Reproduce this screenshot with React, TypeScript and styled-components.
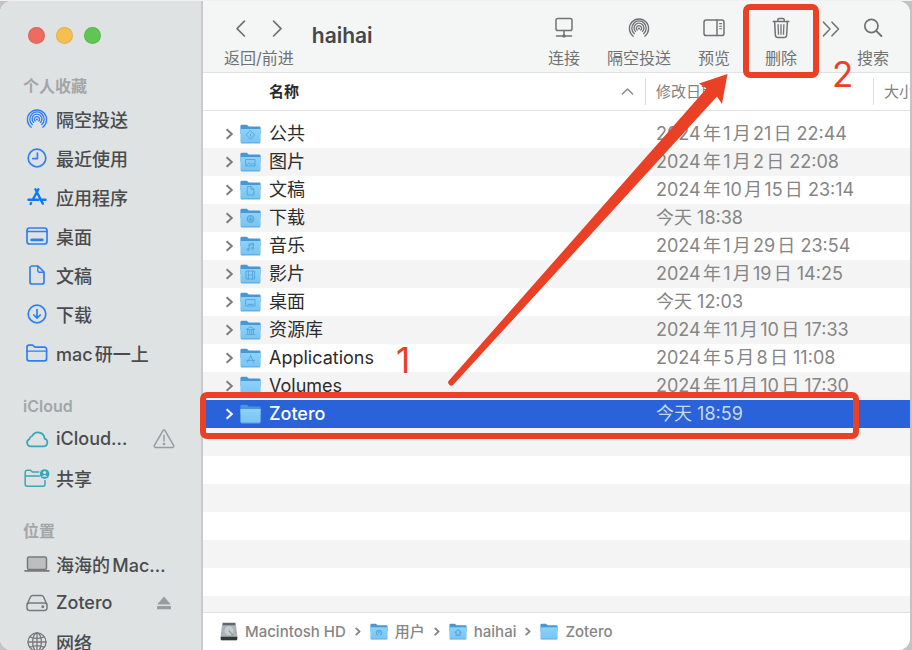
import React from "react";
import styled, { createGlobalStyle } from "styled-components";

const sans = `Inter, "Noto Sans CJK SC", sans-serif`;
const markRed = "#ea4026";

const GlobalStyle = createGlobalStyle`
  *, *::before, *::after { box-sizing: border-box; }
  body {
    margin: 0;
    background: #c2c3c4;
    font-family: ${sans};
    text-autospace: normal;
  }
  button { font: inherit; color: inherit; background: none; border: 0; padding: 0; cursor: default; }
  a { color: inherit; text-decoration: none; }
  svg { display: block; flex: none; }
`;

const Desktop = styled.div`
  position: relative;
  height: 100vh;
  padding-right: 2px;
  border-top: 1px solid #f0f0f0;
  overflow: hidden;
`;

const Window = styled.div`
  display: flex;
  height: 100%;
  background: #fff;
  border-radius: 12px;
  overflow: hidden;
`;

const Sidebar = styled.nav`
  flex: none;
  width: 203px;
  overflow: hidden;
  background: #dee2e3;
  border-right: 2px solid #c9cacc;
`;

const Lights = styled.div`
  display: flex;
  gap: 11px;
  height: 72px;
  padding: 26px 0 0 28px;
`;

const Light = styled.button<{ $color: string }>`
  width: 17px;
  height: 17px;
  border-radius: 50%;
  background: ${(p) => p.$color};
  box-shadow: inset 0 0 0 1px rgba(0, 0, 0, 0.08);
`;

const Group = styled.section`
  margin-bottom: 21px;
`;

const GroupTitle = styled.h2`
  margin: 0;
  padding-left: 23px;
  font-size: 16px;
  line-height: 26px;
  font-weight: 600;
  color: #a3a6a7;
`;

const Place = styled.a`
  display: flex;
  align-items: center;
  height: 39px;
  padding: 0 26px 0 24px;
  gap: 6px;
  font-size: 18px;
  font-weight: 500;
  color: #4a4b4d;
`;

const PlaceIcon = styled.span<{ $color: string }>`
  display: flex;
  justify-content: center;
  flex: none;
  width: 26px;
  color: ${(p) => p.$color};
`;

const PlaceName = styled.span`
  flex: 1;
  white-space: nowrap;
`;

const Extra = styled.span`
  display: flex;
  justify-content: center;
  flex: none;
  width: 22px;
  color: #999c9e;
`;

const Main = styled.main`
  flex: 1;
  min-width: 0;
  display: flex;
  flex-direction: column;
`;

const Toolbar = styled.header`
  flex: none;
  display: flex;
  height: 72px;
  padding: 0 13px 0 21px;
  background: #f4f6f6;
  border-bottom: 1px solid #e0e2e2;
  color: #707273;
  font-size: 16px;
  line-height: 20px;
`;

const History = styled.div`
  display: flex;
  flex-direction: column;
  align-items: center;
  gap: 8px;
  padding-top: 15px;
`;

const HistoryButtons = styled.div`
  display: flex;
  gap: 16px;
  height: 24px;
`;

const Title = styled.h1`
  flex: 1;
  margin: 0;
  padding: 21px 0 0 18px;
  font-size: 21px;
  line-height: 28px;
  font-weight: 600;
  color: #454748;
`;

const Tool = styled.button<{ $width: number }>`
  display: flex;
  flex-direction: column;
  align-items: center;
  flex: none;
  width: ${(p) => p.$width}px;
  padding-top: 15px;
  gap: 8px;
  white-space: nowrap;
`;

const ToolIcon = styled.span`
  display: flex;
  align-items: center;
  height: 24px;
`;

const Files = styled.div`
  flex: 1;
  min-height: 0;
  overflow: hidden;
`;

const Table = styled.table`
  width: 100%;
  table-layout: fixed;
  border-collapse: separate;
  border-spacing: 0;
  tbody::before {
    content: "";
    display: block;
    height: 9px;
  }
`;

const NameCol = styled.col``;
const DateCol = styled.col`
  width: 228px;
`;
const SizeCol = styled.col`
  width: 37px;
`;

const HeadCell = styled.th<{ $strong?: boolean }>`
  height: 38px;
  padding: 0;
  overflow: hidden;
  border-bottom: 1px solid #e2e2e2;
  text-align: left;
  white-space: nowrap;
  font-size: 15px;
  line-height: 22px;
  font-weight: ${(p) => (p.$strong ? 700 : 400)};
  color: ${(p) => (p.$strong ? "#2a2a2a" : "#808080")};
`;

const HeadLabel = styled.span<{ $lead?: boolean }>`
  display: flex;
  align-items: center;
  justify-content: space-between;
  height: 27px;
  padding: 0 ${(p) => (p.$lead ? 11 : 0)}px 0 ${(p) => (p.$lead ? 66 : 10)}px;
  border-left: ${(p) => (p.$lead ? "0" : "1px solid #dcdcdc")};
`;

const Row = styled.tr<{ $selected?: boolean }>`
  height: 28px;
  font-size: 18px;
  line-height: 28px;
  color: ${(p) => (p.$selected ? "#fff" : "#2c2c2c")};
  background: ${(p) => (p.$selected ? "#2962d9" : "#fff")};
  &:nth-child(even) {
    background: #f4f4f4;
  }
`;

const Cell = styled.td`
  height: 28px;
  padding: 0;
`;

const NameCell = styled.div<{ $selected?: boolean }>`
  display: flex;
  align-items: center;
  height: 28px;
  padding-left: 20px;
  font-weight: ${(p) => (p.$selected ? 500 : 400)};
`;

const Disclosure = styled.button<{ $selected?: boolean }>`
  width: 17px;
  height: 20px;
  display: flex;
  align-items: center;
  padding-left: 2px;
  color: ${(p) => (p.$selected ? "#fff" : "#7c7c7c")};
`;

const FileName = styled.span`
  padding-left: 8px;
`;

const DateCell = styled(Cell)<{ $selected?: boolean }>`
  padding-left: 11px;
  white-space: nowrap;
  color: ${(p) => (p.$selected ? "#c9d8f7" : "#858585")};
`;

const PathBar = styled.footer`
  flex: none;
  display: flex;
  align-items: center;
  gap: 9px;
  height: 38px;
  padding: 0 17px;
  border-top: 1px solid #e0e0e0;
  background: #fff;
  font-size: 15px;
  line-height: 20px;
  font-weight: 500;
  color: #868686;
`;

const PathLink = styled.a`
  display: flex;
  align-items: center;
  gap: 7px;
  white-space: nowrap;
`;

const Marks = styled.div`
  position: absolute;
  inset: -1px 0 0 0;
  pointer-events: none;
  color: ${markRed};
`;

const MarkBox = styled.div<{ $x: number; $y: number; $w: number; $h: number }>`
  position: absolute;
  left: ${(p) => p.$x}px;
  top: ${(p) => p.$y}px;
  width: ${(p) => p.$w}px;
  height: ${(p) => p.$h}px;
  border: 6px solid ${markRed};
  border-radius: 7px;
`;

const MarkNumber = styled.span<{ $x: number; $y: number }>`
  position: absolute;
  left: ${(p) => p.$x}px;
  top: ${(p) => p.$y}px;
  font-size: 35px;
  font-weight: 400;
  line-height: 36px;
`;

const MarkArrow = styled.svg`
  position: absolute;
  left: 440px;
  top: 70px;
`;

type IconProps = { size?: number };

const line = {
  fill: "none",
  stroke: "currentColor",
  strokeWidth: 1.7,
  strokeLinecap: "round" as const,
  strokeLinejoin: "round" as const,
};

const AirDrop = ({ size = 22 }: IconProps) => (
  <svg width={size} height={size} viewBox="0 0 22 22" {...line} strokeWidth={1.35}>
    <path d="M5.2 19.2A9.6 9.6 0 1 1 16.8 19.2" />
    <path d="M6.3 16.6A7.2 7.2 0 1 1 15.7 16.6" />
    <path d="M7.5 14.4A4.9 4.9 0 1 1 14.5 14.4" />
    <path d="M9.2 13.1A2.6 2.6 0 1 1 12.8 13.1" />
    <circle cx="11" cy="11.5" r="1.1" fill="currentColor" stroke="none" />
  </svg>
);

const Clock = () => (
  <svg width="20" height="20" viewBox="0 0 20 20" {...line}>
    <circle cx="10" cy="10" r="8.8" />
    <path d="M10.4 5V10.6H5.8" />
  </svg>
);

const AppStore = () => (
  <svg width="20" height="20" viewBox="0 0 20 20" {...line} strokeWidth={2.4}>
    <path d="M8.4 2.2L15.8 16.6M11.4 2.2L6 12.4" />
    <path d="M1.5 12.8H11.6M15.2 12.8H18.5M4.1 16L3.6 17" />
  </svg>
);

const DesktopIcon = () => (
  <svg width="22" height="18" viewBox="0 0 22 18" {...line}>
    <rect x="1" y="1" width="20" height="16" rx="2.6" />
    <path d="M1 4.5H21" strokeWidth="1.4" />
    <path d="M5.6 12.9H16.4" strokeWidth="2.6" />
  </svg>
);

const Doc = () => (
  <svg width="16" height="20" viewBox="0 0 16 20" {...line}>
    <path d="M3 1H9L15 7V17A2 2 0 0 1 13 19H3A2 2 0 0 1 1 17V3A2 2 0 0 1 3 1Z" />
    <path d="M8.8 1.2V5.8A1.4 1.4 0 0 0 10.2 7.2H14.8" strokeWidth="1.4" />
  </svg>
);

const Download = () => (
  <svg width="20" height="20" viewBox="0 0 20 20" {...line}>
    <circle cx="10" cy="10" r="8.8" />
    <path d="M10 5.6V14M6.8 11L10 14.2L13.2 11" />
  </svg>
);

const FolderLine = () => (
  <svg width="22" height="18" viewBox="0 0 22 18" {...line}>
    <path d="M1 14.8V3.2A2 2 0 0 1 3 1.2H6.6L9 3.2H18.6A2 2 0 0 1 20.6 5.2V14.8A2 2 0 0 1 18.6 16.8H3A2 2 0 0 1 1 14.8Z" />
    <path d="M1 7.2H20.6" strokeWidth="1.3" />
  </svg>
);

const Cloud = () => (
  <svg width="24" height="18" viewBox="0 0 24 18" {...line}>
    <path d="M6 16.4H18.4A4 4 0 0 0 19.6 8.6A6.6 6.6 0 0 0 7.2 6A3.9 3.9 0 0 0 4.4 9.1A3.8 3.8 0 0 0 6 16.4Z" />
  </svg>
);

const SharedFolder = () => (
  <svg width="26" height="20" viewBox="0 0 26 20" {...line} strokeWidth={1.5}>
    <path d="M21 12.6V16.2A2 2 0 0 1 19 18.2H3.2A2 2 0 0 1 1.2 16.2V4.2A2 2 0 0 1 3.2 2.2H6.4L8.4 4H14.8M1.2 8H15.4" />
    <circle cx="20.6" cy="6" r="4.8" fill="currentColor" stroke="none" />
    <circle cx="20.6" cy="4.6" r="1.5" fill="#dee2e3" stroke="none" />
    <path d="M18 8.7A2.7 2.2 0 0 1 23.2 8.7Z" fill="#dee2e3" stroke="none" />
  </svg>
);

const Laptop = () => (
  <svg width="26" height="18" viewBox="0 0 26 18" {...line} strokeWidth={1.5}>
    <rect x="3.5" y="2" width="19" height="12.6" rx="1.6" fill="#bcbec0" />
    <path d="M1 15.8H25" strokeWidth="1.7" />
  </svg>
);

const Drive = () => (
  <svg width="22" height="18" viewBox="0 0 22 18" {...line} strokeWidth={1.5}>
    <path d="M1.2 10L4.6 2.8A2.4 2.4 0 0 1 6.8 1.4H15.2A2.4 2.4 0 0 1 17.4 2.8L20.8 10" />
    <rect x="1" y="9" width="20" height="7.4" rx="2.6" />
    <circle cx="16.8" cy="12.7" r=".7" fill="currentColor" />
  </svg>
);

const Globe = () => (
  <svg width="20" height="20" viewBox="0 0 20 20" {...line} strokeWidth={1.3}>
    <circle cx="10" cy="10" r="9" />
    <ellipse cx="10" cy="10" rx="4.4" ry="9" />
    <path d="M10 1V19M1 10H19M3 4.8Q10 8 17 4.8M3 15.2Q10 12 17 15.2" />
  </svg>
);

const Warning = () => (
  <svg width="22" height="20" viewBox="0 0 22 20" {...line} strokeWidth={1.5}>
    <path d="M9.8 1.8L1.4 16.4A1.3 1.3 0 0 0 2.5 18.4H19.5A1.3 1.3 0 0 0 20.6 16.4L12.2 1.8A1.4 1.4 0 0 0 9.8 1.8Z" />
    <path d="M11 6.6V12" />
    <circle cx="11" cy="15" r=".6" fill="currentColor" />
  </svg>
);

const Eject = () => (
  <svg width="14" height="14" viewBox="0 0 14 14" fill="currentColor">
    <path d="M7 0.4L13.8 8.4H0.2Z" />
    <rect x="0" y="10" width="14" height="3.2" rx=".6" />
  </svg>
);

const Chevron = ({ back }: { back?: boolean }) => (
  <svg width="20" height="24" viewBox="0 0 20 24" {...line}>
    <path d={back ? "M13.4 5.2L6 12.6L13.4 20" : "M6.6 5.2L14 12.6L6.6 20"} />
  </svg>
);

const ConnectIcon = () => (
  <svg width="18" height="22" viewBox="0 0 18 22" {...line} strokeWidth={1.5}>
    <rect x="1" y="1.5" width="16" height="12" rx="1.8" />
    <path d="M9 13.5V18M1.5 19H16.5" />
    <circle cx="9" cy="19" r="1.7" fill="currentColor" stroke="none" />
  </svg>
);

const PreviewIcon = () => (
  <svg width="22" height="18" viewBox="0 0 22 18" {...line} strokeWidth={1.5}>
    <rect x="1" y="1" width="20" height="15.6" rx="2.2" />
    <path d="M14 1V16.6" />
    <path d="M16.6 4.6H18.6M16.6 7.2H18.6M16.6 9.8H18.6" strokeWidth="1.1" />
  </svg>
);

const TrashIcon = () => (
  <svg width="18" height="22" viewBox="0 0 18 22" {...line} strokeWidth={1.5}>
    <path d="M1.2 4.4H16.8M5.8 4.2V2.8A1.4 1.4 0 0 1 7.2 1.4H10.8A1.4 1.4 0 0 1 12.2 2.8V4.2" />
    <path d="M2.6 4.6L3.4 18.6A2 2 0 0 0 5.4 20.4H12.6A2 2 0 0 0 14.6 18.6L15.4 4.6" />
    <path d="M6.1 7.6L6.5 17.2M9 7.6V17.2M11.9 7.6L11.5 17.2" strokeWidth="1.3" />
  </svg>
);

const MoreIcon = () => (
  <svg width="20" height="20" viewBox="0 0 20 20" {...line} strokeWidth={1.6}>
    <path d="M2.5 4.2L9 11L2.5 17.8M11 4.2L17.5 11L11 17.8" />
  </svg>
);

const SearchIcon = () => (
  <svg width="20" height="20" viewBox="0 0 20 20" {...line}>
    <circle cx="8.4" cy="8" r="6.6" />
    <path d="M13.2 12.8L18.4 18" strokeWidth="1.9" />
  </svg>
);

const SortUp = () => (
  <svg width="13" height="9" viewBox="0 0 13 9" {...line} stroke="#8a8a8a" strokeWidth={1.5}>
    <path d="M1.4 7L6.5 2L11.6 7" />
  </svg>
);

const RowChevron = () => (
  <svg width="9" height="12" viewBox="0 0 9 12" {...line} strokeWidth={2} strokeLinecap="butt" strokeLinejoin="miter">
    <path d="M1.6 1.2L6.8 6L1.6 10.8" />
  </svg>
);

const PathChevron = () => (
  <svg width="6" height="9" viewBox="0 0 6 9" {...line} strokeWidth={1.8}>
    <path d="M1.2 1.4L4.6 4.5L1.2 7.6" />
  </svg>
);

const glyphs: Record<string, React.ReactNode> = {
  public: <path d="M10.5 6.8L14.6 11L10.5 15.2L6.4 11ZM10.5 10.2V12.2" />,
  picture: <path d="M6 7.5H15V14H6ZM6.4 13.4L9 10.8L11 12.6L12.6 11.2L14.8 13.4" />,
  doc: <path d="M7.6 6.6H11.2L13.8 9.2V15H7.6ZM11 6.8V9.4H13.6" />,
  download: <path d="M10.5 7.8A3.2 3.2 0 1 1 10.4 7.8ZM10.5 9.4V12.4M9.2 11.2L10.5 12.6L11.8 11.2" strokeWidth="1.5" />,
  music: <path d="M9 14V8L13.4 7V12.8M9 14A1.2 1 0 1 1 8.9 13.2M13.4 12.8A1.2 1 0 1 1 13.3 12M9 9.4L13.4 8.4" />,
  movie: <path d="M6.4 7H14.6V15H6.4ZM8.4 7V15M12.6 7V15M8.4 11H12.6" />,
  desktop: <path d="M6 7.6H15V14H6ZM8 12.4H13" />,
  library: <path d="M6.4 9.4L10.5 6.8L14.6 9.4ZM7.6 9.8V13.6M9.6 9.8V13.6M11.6 9.8V13.6M13.4 9.8V13.6M6.2 14.6H14.8" />,
  apps: <path d="M10.5 7L13.8 14.6M10.5 8L7.2 14.6M6.2 12.4H14.8" />,
  users: <path d="M8.8 14.2A3 3 0 1 1 12.2 14.2M10.5 10.2V11.6" strokeWidth="1.5" />,
  home: <path d="M7 11L10.5 7.8L14 11M8.2 10.6V14.4H12.8V10.6" strokeWidth="1.5" />,
};

const Folder = ({ glyph, size = 21 }: { glyph?: string; size?: number }) => (
  <svg width={size} height={size - 1} viewBox="0 0 21 20">
    <defs>
      <linearGradient id="folderFront" x1="0" y1="0" x2="0" y2="1">
        <stop offset="0" stopColor="#8dd1f8" />
        <stop offset="1" stopColor="#78c4f3" />
      </linearGradient>
    </defs>
    <path d="M.4 2.2A1.4 1.4 0 0 1 1.8.8H6.8L8.8 2.6H19.2A1.4 1.4 0 0 1 20.6 4V10H.4Z" fill="#4797d3" />
    <path d="M.4 5H20.6V17.8A1.4 1.4 0 0 1 19.2 19.2H1.8A1.4 1.4 0 0 1 .4 17.8Z" fill="url(#folderFront)" />
    <path d="M1 18.9H20" stroke="#4ea0d9" strokeWidth=".8" />
    {glyph && (
      <g fill="none" stroke="#4e9fd8" strokeWidth="1" strokeLinejoin="round" strokeLinecap="round" opacity=".8">
        {glyphs[glyph]}
      </g>
    )}
  </svg>
);

const HardDisk = () => (
  <svg width="18" height="19" viewBox="0 0 20 20" preserveAspectRatio="none">
    <path d="M2.6 .6H17.4L19.2 14V17.6A1.4 1.4 0 0 1 17.8 19.2H2.2A1.4 1.4 0 0 1 .8 17.6V14Z" fill="#aab3b8" />
    <path d="M3.4 1H16.6L17 3.4H3Z" fill="#60676c" />
    <circle cx="10" cy="9.2" r="5" fill="#c6cdd1" />
    <path d="M10 9.2L14.4 14" stroke="#8f989d" strokeWidth="1.2" />
    <path d="M.8 15.6H19.2V17.6A1.4 1.4 0 0 1 17.8 19.2H2.2A1.4 1.4 0 0 1 .8 17.6Z" fill="#34383b" />
  </svg>
);

const blue = "#2f80ee";
const teal = "#3ba5b8";
const gray = "#77797b";

type PlaceData = { name: string; icon: React.ReactNode; color: string; extra?: React.ReactNode };

const groups: { title: string; places: PlaceData[] }[] = [
  {
    title: "个人收藏",
    places: [
      { name: "隔空投送", icon: <AirDrop />, color: blue },
      { name: "最近使用", icon: <Clock />, color: blue },
      { name: "应用程序", icon: <AppStore />, color: "#0f78f2" },
      { name: "桌面", icon: <DesktopIcon />, color: blue },
      { name: "文稿", icon: <Doc />, color: blue },
      { name: "下载", icon: <Download />, color: blue },
      { name: "mac研一上", icon: <FolderLine />, color: blue },
    ],
  },
  {
    title: "iCloud",
    places: [
      { name: "iCloud…", icon: <Cloud />, color: teal, extra: <Warning /> },
      { name: "共享", icon: <SharedFolder />, color: teal },
    ],
  },
  {
    title: "位置",
    places: [
      { name: "海海的Mac…", icon: <Laptop />, color: gray },
      { name: "Zotero", icon: <Drive />, color: gray, extra: <Eject /> },
      { name: "网络", icon: <Globe />, color: gray },
    ],
  },
];

const files: { name: string; glyph?: string; date: string; selected?: boolean }[] = [
  { name: "公共", glyph: "public", date: "2024年1月21日 22:44" },
  { name: "图片", glyph: "picture", date: "2024年1月2日 22:08" },
  { name: "文稿", glyph: "doc", date: "2024年10月15日 23:14" },
  { name: "下载", glyph: "download", date: "今天 18:38" },
  { name: "音乐", glyph: "music", date: "2024年1月29日 23:54" },
  { name: "影片", glyph: "movie", date: "2024年1月19日 14:25" },
  { name: "桌面", glyph: "desktop", date: "今天 12:03" },
  { name: "资源库", glyph: "library", date: "2024年11月10日 17:33" },
  { name: "Applications", glyph: "apps", date: "2024年5月8日 11:08" },
  { name: "Volumes", date: "2024年11月10日 17:30" },
  { name: "Zotero", date: "今天 18:59", selected: true },
];

const emptyRows = Array.from({ length: 9 }, (_, i) => i);

const tools = [
  { label: "连接", width: 70, icon: <ConnectIcon /> },
  { label: "隔空投送", width: 80, icon: <AirDrop /> },
  { label: "预览", width: 70, icon: <PreviewIcon /> },
  { label: "删除", width: 64, icon: <TrashIcon /> },
  { label: "", width: 36, icon: <MoreIcon /> },
  { label: "搜索", width: 48, icon: <SearchIcon /> },
];

const path = [
  { name: "Macintosh HD", icon: <HardDisk /> },
  { name: "用户", icon: <Folder glyph="users" size={18} /> },
  { name: "haihai", icon: <Folder glyph="home" size={18} /> },
  { name: "Zotero", icon: <Folder size={18} /> },
];

export default function App() {
  return (
    <Desktop>
      <GlobalStyle />
      <Window>
        <Sidebar>
          <Lights>
            <Light $color="#ed6b60" aria-label="关闭" />
            <Light $color="#f5bf4f" aria-label="最小化" />
            <Light $color="#61c554" aria-label="缩放" />
          </Lights>
          {groups.map((g) => (
            <Group key={g.title}>
              <GroupTitle>{g.title}</GroupTitle>
              {g.places.map((p) => (
                <Place href="#" key={p.name}>
                  <PlaceIcon $color={p.color}>{p.icon}</PlaceIcon>
                  <PlaceName>{p.name}</PlaceName>
                  {p.extra && <Extra>{p.extra}</Extra>}
                </Place>
              ))}
            </Group>
          ))}
        </Sidebar>
        <Main>
          <Toolbar>
            <History>
              <HistoryButtons>
                <button aria-label="返回"><Chevron back /></button>
                <button aria-label="前进"><Chevron /></button>
              </HistoryButtons>
              <span>返回/前进</span>
            </History>
            <Title>haihai</Title>
            {tools.map((t) => (
              <Tool key={t.label} $width={t.width} aria-label={t.label || "更多"}>
                <ToolIcon>{t.icon}</ToolIcon>
                {t.label && <span>{t.label}</span>}
              </Tool>
            ))}
          </Toolbar>
          <Files>
            <Table>
              <colgroup>
                <NameCol />
                <DateCol />
                <SizeCol />
              </colgroup>
              <thead>
                <tr>
                  <HeadCell $strong aria-sort="ascending">
                    <HeadLabel $lead>名称<SortUp /></HeadLabel>
                  </HeadCell>
                  <HeadCell><HeadLabel>修改日期</HeadLabel></HeadCell>
                  <HeadCell><HeadLabel>大小</HeadLabel></HeadCell>
                </tr>
              </thead>
              <tbody>
                {files.map((f) => (
                  <Row key={f.name} $selected={f.selected}>
                    <Cell>
                      <NameCell $selected={f.selected}>
                        <Disclosure $selected={f.selected} aria-label={`展开${f.name}`}>
                          <RowChevron />
                        </Disclosure>
                        <Folder glyph={f.glyph} />
                        <FileName>{f.name}</FileName>
                      </NameCell>
                    </Cell>
                    <DateCell $selected={f.selected}>{f.date}</DateCell>
                    <Cell />
                  </Row>
                ))}
                {emptyRows.map((i) => (
                  <Row key={i}>
                    <Cell colSpan={3} />
                  </Row>
                ))}
              </tbody>
            </Table>
          </Files>
          <PathBar>
            {path.map((p, i) => (
              <React.Fragment key={p.name}>
                {i > 0 && <PathChevron />}
                <PathLink href="#">{p.icon}{p.name}</PathLink>
              </React.Fragment>
            ))}
          </PathBar>
        </Main>
      </Window>
      <Marks>
        <MarkBox $x={743} $y={4} $w={76} $h={74} />
        <MarkBox $x={200} $y={392} $w={659} $h={47} />
        <MarkArrow width="300" height="320" viewBox="0 0 300 320" fill="currentColor">
          <path d="M287.5 4L282 34L277 26.5L13.5 314.5A3 3 0 0 1 9 310.5L266.5 18.5L259 13.5Z" />
        </MarkArrow>
        <MarkNumber $x={396} $y={342}>1</MarkNumber>
        <MarkNumber $x={832} $y={56}>2</MarkNumber>
      </Marks>
    </Desktop>
  );
}
